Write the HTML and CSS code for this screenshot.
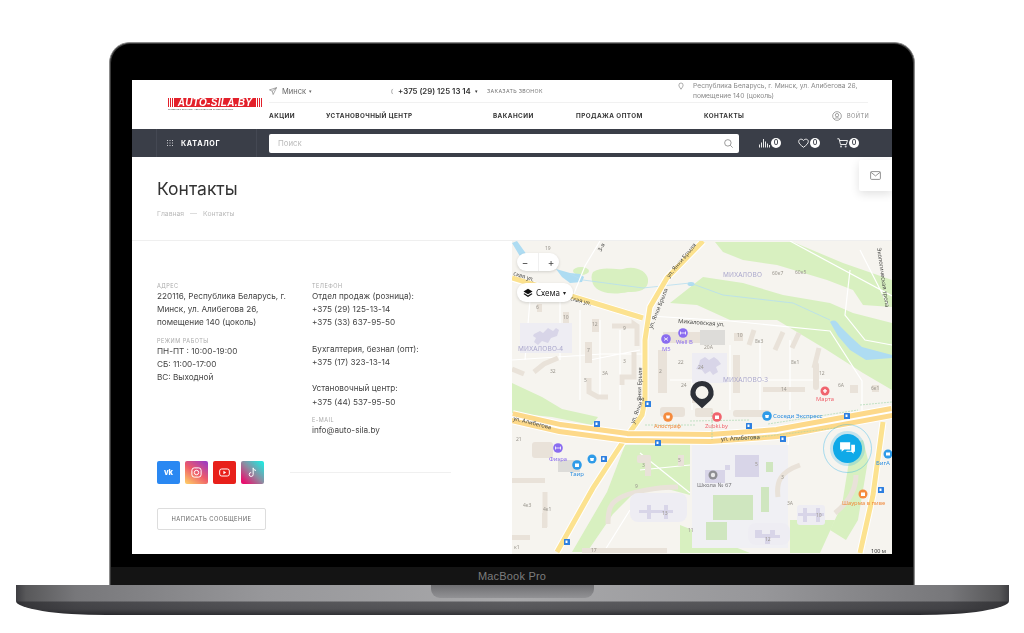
FILE: index.html
```html
<!DOCTYPE html>
<html lang="ru">
<head>
  <meta charset="UTF-8" />
  <title>Контакты</title>
  <link rel="stylesheet" href="styles.css">
</head>
<body>
  <div class="laptop">
    <div class="lid">
      <div class="screen">
        <header class="site-head">
          <a class="logo">
            <span class="logo-band"><i class="logo-ends"></i><b>AUTO-SILA.BY</b><i class="logo-ends"></i></span>
            <span class="logo-sub">ИНТЕРНЕТ-МАГАЗИН АВТОТОВАРОВ И ЭЛЕКТРОНИКИ</span>
          </a>
          <div class="head-right">
            <div class="top-row">
              <div class="city">
                <svg class="ico" viewBox="0 0 10 10"><path class="line" d="M9.500.8.600 3.600l3.400 1.600 1.200 4.200zM4 5.200 9.500.8"/></svg>
                <span>Минск</span><em>▾</em>
              </div>
              <div class="phone">
                <svg class="ico-ph" viewBox="0 0 5 8"><path class="line" d="M3.600.8C1.600 1.400 1.600 6.600 3.600 7.200"/></svg>
                <b>+375 (29) 125 13 14</b><em>▾</em>
              </div>
              <a class="callback">заказать звонок</a>
              <div class="address">
                <svg class="ico-pin" viewBox="0 0 8 10"><path class="line" d="M4 9.300C2.200 6.800 1.200 5.400 1.200 3.800a2.800 2.800 0 0 1 5.600 0C6.800 5.400 5.800 6.800 4 9.300z"/></svg>
                <span>Республика Беларусь, г. Минск, ул. Алибегова 26, помещение 140 (цоколь)</span>
              </div>
            </div>
            <nav class="main-nav">
              <a>Акции</a>
              <a>Установочный центр</a>
              <a>Вакансии</a>
              <a>Продажа оптом</a>
              <a>Контакты</a>
              <a class="login">
                <svg class="ico-user" viewBox="0 0 12 12"><circle class="line" cx="6" cy="6" r="5.200"/><circle class="line" cx="6" cy="5" r="2"/><path class="line" d="M2.800 9.500C4 7.800 8 7.800 9.200 9.500"/></svg>
                <span>войти</span>
              </a>
            </nav>
          </div>
        </header>

        <div class="dark-bar">
          <div class="catalog">
            <svg class="ico-grid" viewBox="0 0 6 6"><path class="dots" d="M0 0h1v1H0zM2.500 0h1v1h-1zM5 0h1v1H5zM0 2.500h1v1H0zM2.500 2.500h1v1h-1zM5 2.500h1v1H5zM0 5h1v1H0zM2.500 5h1v1h-1zM5 5h1v1H5z"/></svg>
            <span>Каталог</span>
          </div>
          <div class="search">
            <span>Поиск</span>
            <svg class="ico-search" viewBox="0 0 10 10"><circle class="line" cx="4.300" cy="4.300" r="3.600"/><path class="line" d="m7 7 2.600 2.600"/></svg>
          </div>
          <div class="counters">
            <div class="counter">
              <svg viewBox="0 0 11 10"><path class="bars" d="M.5 6.500v3M2.500 4.500v5M4.500 1v8.500M6.500 3.500v6M8.500 5.500v4M10.500 7v2.500"/></svg>
              <b>0</b>
            </div>
            <div class="counter">
              <svg viewBox="0 0 11 10"><path class="bars" d="M5.500 9.300C2.500 7 .7 5.500.7 3.400.7 1 4 .4 5.500 2.500 7 .4 10.300 1 10.300 3.400c0 2.100-1.800 3.600-4.800 5.900z"/></svg>
              <b>0</b>
            </div>
            <div class="counter">
              <svg viewBox="0 0 11 10"><path class="bars" d="M.3.800h1.800L3.500 6.500h5.800l1.200-4H2.700"/><circle class="dots" cx="4" cy="8.600" r="1"/><circle class="dots" cx="8.700" cy="8.600" r="1"/></svg>
              <b>0</b>
            </div>
          </div>
        </div>

        <div class="mail-tab">
          <svg viewBox="0 0 11 9"><rect class="line" x=".6" y=".6" width="9.800" height="7.800" rx="1"/><path class="line" d="m.8 1.200 4.700 3.700 4.700-3.700"/></svg>
        </div>

        <section class="page-title">
          <h1>Контакты</h1>
          <div class="crumbs"><span>Главная</span><i></i><span>Контакты</span></div>
        </section>

        <section class="contacts">
          <div class="info">
            <div class="info-cols">
              <div class="col">
                <h4>Адрес</h4>
                <p>220116, Республика Беларусь, г. Минск, ул. Алибегова 26, помещение 140 (цоколь)</p>
                <h4>Режим работы</h4>
                <p>ПН-ПТ : 10:00-19:00<br>СБ: 11:00-17:00<br>ВС: Выходной</p>
              </div>
              <div class="col">
                <h4>Телефон</h4>
                <p>Отдел продаж (розница):<br>+375 (29) 125-13-14<br>+375 (33) 637-95-50<br><br>Бухгалтерия, безнал (опт):<br>+375 (17) 323-13-14<br><br>Установочный центр:<br>+375 (44) 537-95-50</p>
                <h4>E-mail</h4>
                <p>info@auto-sila.by</p>
              </div>
            </div>
            <div class="social-row">
              <a class="soc vk">vk</a>
              <a class="soc ig"><svg viewBox="0 0 10 10"><rect class="wline" x=".8" y=".8" width="8.400" height="8.400" rx="2.200"/><circle class="wline" cx="5" cy="5" r="2"/></svg></a>
              <a class="soc yt"><svg viewBox="0 0 10 10"><rect class="wline" x=".6" y="1.800" width="8.800" height="6.400" rx="1.800"/><path class="wfill" d="M4 3.500 6.500 5 4 6.500z"/></svg></a>
              <a class="soc tt"><svg viewBox="0 0 10 10"><path class="wline" d="M5.600.8v6a1.800 1.800 0 1 1-1.800-1.800M5.600.8c.2 1.400 1.200 2.200 2.600 2.300"/></svg></a>
              <span class="soc-line"></span>
            </div>
            <a class="msg-btn">Написать сообщение</a>
          </div>

          <div class="map">
            <svg class="map-svg" viewBox="512 241 380 313">
              <rect class="m-bg" x="512" y="241" width="380" height="313"/>
              <!-- зелень -->
              <path class="m-green" d="M715 242h78l50 21 49 17v27l-29-2-10-15-26-10-50-15-34-5-20-8z"/>
              <path class="m-green" d="M670 303l33-26 40 6 40 12 47 8 23 10 39 10v67l-29-17-36-23-50-30h-47l-33-15z"/>
              <path class="m-green" d="M593 272c10-6 20-2 30-3 12-4 24 2 25 10 1 8-5 14-20 13-14 3-30 2-35-8-2-5-2-9 0-12z"/>
              <ellipse class="m-green" cx="581" cy="271" rx="8" ry="4"/>
              <path class="m-green" d="M512 383l30 14 20 12 36 8-6 8-40-8-40-4z"/>
              <path class="m-green" d="M625 445h65v50l-30-8-25 5-22 22-26 38h-15l35-60z"/>
              <path class="m-green" d="M790 445h50l10 10-8 50-12 25 16 10 12-20 10-60-5-20-20 5z"/>
              <path class="m-green" d="M680 525l70 28h-70zM790 520l45 0-15 33h-30z"/>
              <rect class="m-school" x="692" y="445" width="96" height="103"/>
              <rect class="m-field" x="713" y="495" width="40" height="25"/>
              <rect class="m-field" x="706" y="522" width="21" height="18"/>
              <rect class="m-field" x="761" y="487" width="8" height="25"/>
              <rect class="m-field" x="766" y="462" width="7" height="10"/>
              <!-- вода -->
              <path class="m-water" d="M512 243l5-2 10 14-6 3zM556 269l14 4 10 1 4 3-2 5-12 1-8-6zM830 322c4-3 7-1 10 4l12 12 10 9 30 8v3l-26 2-16-10-12-14z"/>
              <ellipse class="m-water" cx="691" cy="284" rx="3.500" ry="2"/>
              <path class="m-stream" d="M570 274l13 6 60 8 47-5 33 12 70 8 37 17"/>
              <!-- дорожки -->
              <path class="m-path" d="M790 241l102 55M860 250l28 55M850 270l-5 45 20 25 27 5M600 241l-15 25-12 30M650 316l80 5 100 10 32 50v30M670 380h160M512 360l90-6 40 0M640 350l-50 10M580 310v90M600 320v80M620 330v80M530 300l-5 60M560 300v60M692 380v30M730 345v65M760 340v70M790 340v70M640 453l50 40M640 470l50-5M630 510l-25 40M790 430l-2 15"/>
              <!-- дома -->
              <g class="m-house">
                <rect x="658" y="350" width="9" height="43"/>
                <rect x="733" y="355" width="7" height="38"/>
                <rect x="763" y="387" width="42" height="5"/>
                <rect x="663" y="332" width="37" height="11"/>
                <rect x="734" y="333" width="9" height="8"/>
                <rect x="585" y="342" width="7" height="21"/>
                <rect x="563" y="312" width="6" height="12"/>
                <rect x="592" y="319" width="7" height="13"/>
                <rect x="537" y="304" width="5" height="8"/>
                <rect x="660" y="407" width="25" height="10" rx="3"/>
                <rect x="695" y="408" width="18" height="9" rx="2"/>
                <rect x="733" y="410" width="37" height="7" rx="3"/>
                <rect x="532" y="442" width="21" height="16" rx="3"/>
                <rect x="637" y="455" width="14" height="8" rx="2"/>
                <rect x="645" y="463" width="6" height="13"/>
                <rect x="678" y="455" width="6" height="11"/>
                <rect x="512" y="478" width="33" height="5"/>
                <rect x="582" y="548" width="85" height="5"/>
                <rect x="512" y="535" width="18" height="5"/>
                <rect x="542" y="513" width="5" height="15"/>
                <rect x="692" y="398" width="6" height="5"/>
                <rect x="850" y="385" width="8" height="8"/>
                <rect x="872" y="385" width="7" height="7"/>
                <rect x="813" y="362" width="6" height="28" rx="3"/>
              </g>
              <path class="m-hstroke" d="M612 326h22v-2l3 2v20M622 385v-8h12v-25M512 369l12 5M534 372l10-8 14-6M589 378v14l9 5h10M775 350l8-18M792 348l7-15M814 368l5-20M749 345l5-15M608 524c0-14 2-20 10-25 10-7 40-12 60-12M778 497c-2-15 2-25 22-32M856 475c0 14-6 26-21 38M545 492v35"/>
              <path class="m-grey" d="M700 330h25v15h-25zM558 460h22v12h-22z"/>
              <!-- кварталы -->
              <rect class="m-lav" x="520" y="323" width="52" height="30"/>
              <rect class="m-lav" x="692" y="353" width="35" height="30"/>
              <rect class="m-lav" x="630" y="493" width="57" height="29" rx="8"/>
              <rect class="m-lav" x="797" y="505" width="28" height="20" rx="3"/>
              <rect class="m-lav" x="748" y="523" width="42" height="22" rx="8"/>
              <path class="m-blob" d="M534 334l6-3 3 2 5-5 5 3 3-3 3 2-2 6-6 2-3 5-6-2-4 4-4-3 2-4-3-2z"/>
              <path class="m-blob" d="M700 360l5-3 4 3 5-3 4 3 3 4-5 3 2 5-5 3-3-4-5 3-3-4-6-1 3-5z"/>
              <path class="m-blob" d="M735 455h24v22h-24zM705 470h25v-5h-5v18h-20z"/>
              <path class="m-blob" d="M647 505h4v5h13v-5h4v5h5v3h-5v6h-4v-6h-13v6h-4v-6h-8v-3h8zM803 508h4v5h9v-5h4v5h4v3h-4v6h-4v-6h-9v6h-4v-6h-5v-3h5zM755 530h7v4h8v-4h5v5h5v3h-10v6h-5v-6h-10z"/>
              <!-- дороги -->
              <g class="road-case">
                <path d="M512 278l131 40"/>
                <path d="M703 241l-36 37-17 29-5 33v60l-3 15-19 27-30 46-36 64"/>
                <path d="M883 422l-10 73-13 58"/>
              </g>
              <g class="road">
                <path d="M512 278l131 40"/>
                <path d="M703 241l-36 37-17 29-5 33v60l-3 15-19 27-30 46-36 64"/>
                <path d="M883 422l-10 73-13 58"/>
              </g>
              <path class="road-big-case" d="M512 417l48 11 67 9 83 1 67-5 115-21"/>
              <path class="road-big" d="M512 417l48 11 67 9 83 1 67-5 115-21"/>
              <path class="road-mid" d="M512 417l48 11 67 9 83 1 67-5 115-21"/>
              <path class="m-dash" d="M645 425h50M690 421l60-1M768 424l90-14M712 412v28M735 440l100-12M860 405l32-3"/>
              <!-- подписи -->
              <text class="t-dist" x="723" y="277">МИХАЛОВО</text>
              <text class="t-dist" x="723" y="382">МИХАЛОВО-3</text>
              <text class="t-dist" x="518" y="351">МИХАЛОВО-4</text>
              <text class="t-num" x="545" y="250">19</text>
              <text class="t-num" x="772" y="275">60к7</text>
              <text class="t-num" x="795" y="274">60к5</text>
              <text class="t-num" x="563" y="319">10</text>
              <text class="t-num" x="592" y="326">12</text>
              <text class="t-num" x="536" y="309">6</text>
              <text class="t-num" x="623" y="330">9</text>
              <text class="t-num" x="587" y="352">7</text>
              <text class="t-num" x="623" y="363">3</text>
              <text class="t-num" x="602" y="375">3А</text>
              <text class="t-num" x="550" y="373">32</text>
              <text class="t-num" x="584" y="382">5</text>
              <text class="t-num" x="659" y="373">2</text>
              <text class="t-num" x="678" y="364">22</text>
              <text class="t-num" x="698" y="369">24</text>
              <text class="t-num" x="681" y="387">24</text>
              <text class="t-num" x="704" y="349">20А</text>
              <text class="t-num" x="737" y="337">10</text>
              <text class="t-num" x="755" y="343">8к3</text>
              <text class="t-num" x="791" y="364">8к1</text>
              <text class="t-num" x="819" y="375">12</text>
              <text class="t-num" x="781" y="391">14</text>
              <text class="t-num" x="838" y="387">6А</text>
              <text class="t-num" x="871" y="390">6к1</text>
              <text class="t-num" x="516" y="441">21</text>
              <text class="t-num" x="642" y="467">3</text>
              <text class="t-num" x="678" y="462">5</text>
              <text class="t-num" x="755" y="466">5</text>
              <text class="t-num" x="781" y="479">3</text>
              <text class="t-num" x="635" y="488">9</text>
              <text class="t-num" x="523" y="507">4к3</text>
              <text class="t-num" x="543" y="511">4к1</text>
              <text class="t-num" x="662" y="515">13</text>
              <text class="t-num" x="688" y="532">11</text>
              <text class="t-num" x="787" y="505">3А</text>
              <text class="t-num" x="816" y="517">10</text>
              <text class="t-num" x="765" y="541">12</text>
              <text class="t-num" x="591" y="552">17</text>
              <text class="t-num" x="514" y="549">к1</text>
              <text class="t-road" x="678" y="323" transform="rotate(4 678 323)">Михаловская ул.</text>
              <text class="t-road" x="721" y="441" transform="rotate(-3 721 441)">ул. Алибегова</text>
              <text class="t-road" x="513" y="420" transform="rotate(14 513 420)">ул. Алибегова</text>
              <text class="t-road" x="652" y="329" transform="rotate(-68 652 329)">ул. Янки Брыля</text>
              <text class="t-road" x="669" y="278" transform="rotate(-50 669 278)">ул. Янки Брыля</text>
              <text class="t-road" x="641" y="401" transform="rotate(-88 641 401)">Янки Брыля</text>
              <text class="t-road" x="634" y="424" transform="rotate(-68 634 424)">ул. Янки Б</text>
              <text class="t-road" x="570" y="300" transform="rotate(15 570 300)">ская ул.</text>
              <text class="t-road" x="513" y="275" transform="rotate(18 513 275)">ская ул.</text>
              <text class="t-road" x="877" y="248" transform="rotate(82 877 248)">Экологическая тропа</text>
              <text class="t-road" x="601" y="252" transform="rotate(-60 601 252)">3-я</text>

              <!-- метки -->
              <circle class="p-purple" cx="666" cy="339" r="4.800"/>
              <text class="t-purple" x="662" y="351">M5</text>
              <circle class="p-purple" cx="683" cy="333" r="4.800"/>
              <text class="t-purple" x="676" y="344">Well B</text>
              <circle class="p-red" cx="825" cy="391" r="4.500"/>
              <text class="t-red" x="816" y="401">Марта</text>
              <circle class="p-orange" cx="668" cy="417" r="4.800"/>
              <text class="t-orange" x="654" y="428">Алостраф</text>
              <circle class="p-red" cx="717" cy="417" r="4.800"/>
              <text class="t-red" x="705" y="428">Zubki.by</text>
              <circle class="p-blue" cx="767" cy="416" r="4.800"/>
              <text class="t-blue" x="773" y="418">Соседи Экспресс</text>
              <circle class="p-purple" cx="558" cy="448" r="4.800"/>
              <text class="t-purple" x="549" y="461">Фиэра</text>
              <circle class="p-blue" cx="592" cy="459" r="4.500"/>
              <circle class="p-blue" cx="577" cy="465" r="4.800"/>
              <text class="t-blue" x="570" y="476">Таир</text>
              <circle class="p-grey" cx="713" cy="475" r="4.500"/>
              <text class="t-grey" x="697" y="487">Школа № 67</text>
              <circle class="p-orange" cx="863" cy="494" r="4.500"/>
              <text class="t-orange" x="842" y="505">Шаурма в пиве</text>
              <circle class="p-blue" cx="888" cy="454" r="4.500"/>
              <text class="t-blue" x="876" y="465">БигА</text>
              <path class="poi-mark" d="M664 337.500l4 3M668 337.500l-4 3M680.500 333h5M680.500 331.500v3M685.500 331.500v3M555.500 448h5M555.500 446.500v3M560.500 446.500v3"/>
              <path class="poi-fill" d="M823 390.200h1.300v-1.300h1.400v1.300h1.300v1.400h-1.300v1.300h-1.400v-1.300H823zM666 415.500h4l-.5 3h-3zM715 415.500h4v3.500h-4zM765 415h4l-.6 3h-2.800zM590 458h4l-.6 3h-2.800zM575 463.500h4v3.500h-4zM861 492.500h4v3.500h-4zM886 452.500h4v3h-4z"/>
              <circle class="poi-white" cx="713" cy="475" r="2.200"/>
              <path class="stops" d="M594.500 421h5q.5 0 .5.500v5q0 .5-.5.500h-5q-.5 0-.5-.500v-5q0-.5.500-.500zM645.500 401h5q.5 0 .5.500v5q0 .5-.5.500h-5q-.5 0-.5-.500v-5q0-.5.500-.500zM655.500 440h5q.5 0 .5.500v5q0 .5-.5.500h-5q-.5 0-.5-.500v-5q0-.5.500-.500zM746.500 423h5q.5 0 .5.500v5q0 .5-.5.500h-5q-.5 0-.5-.500v-5q0-.5.500-.500zM780.500 436h5q.5 0 .5.500v5q0 .5-.5.500h-5q-.5 0-.5-.500v-5q0-.5.500-.500zM844.500 413h5q.5 0 .5.500v5q0 .5-.5.500h-5q-.5 0-.5-.500v-5q0-.5.500-.500zM601.500 456h5q.5 0 .5.500v5q0 .5-.5.500h-5q-.5 0-.5-.500v-5q0-.5.500-.500zM564.500 539h5q.5 0 .5.500v5q0 .5-.5.500h-5q-.5 0-.5-.500v-5q0-.5.500-.500zM878.500 487h5q.5 0 .5.500v5q0 .5-.5.500h-5q-.5 0-.5-.500v-5q0-.5.500-.500z"/>
              <path class="stop-mark" d="M595.500 422.500h2v2.500h-2zM646.500 402.500h2v2.500h-2zM656.500 441.500h2v2.500h-2zM747.500 424.500h2v2.500h-2zM781.500 437.500h2v2.500h-2zM845.500 414.500h2v2.500h-2zM602.500 457.500h2v2.500h-2zM565.500 540.500h2v2.500h-2zM879.500 488.500h2v2.500h-2z"/>
              <path class="pin" fill-rule="evenodd" d="M702 381a11.500 11.500 0 0 1 8.400 19.400l-8.400 7.800-8.400-7.800A11.500 11.500 0 0 1 702 381zm0 5a6.500 6.500 0 1 0 0 13 6.500 6.500 0 0 0 0-13z"/>
              <text class="t-scale" x="871" y="553">100 м</text>
            </svg>

            <div class="zoom-ctrl"><span>−</span><i></i><span>+</span></div>
            <div class="layer-ctrl">
              <svg viewBox="0 0 10 10"><path class="dots-k" d="M5 .8 9.500 3.500 5 6.200.5 3.500z"/><path class="dots-k" d="M1.500 5.300 5 7.400l3.500-2.100 1 .7L5 8.900.5 6z"/></svg>
              <span>Схема</span><em>▾</em>
            </div>
            <div class="chat-btn">
              <svg viewBox="0 0 16 14"><path class="wfill" d="M1 1h9.500v7H5L2.500 10V8H1zM11.500 3.500H15v6.500h-1.200v2L11.500 10H6.500l1-1h4z"/></svg>
            </div>
          </div>
        </section>
      </div>
      <div class="chin">MacBook Pro</div>
    </div>
    <div class="base">
      <div class="notch"></div>
    </div>
  </div>
</body>
</html>
```

FILE: styles.css
```css
* {
  box-sizing: border-box;
}
body {
  margin: 0;
  background: #fff;
  font-family: Inter, "Open Sans", sans-serif;
  color: #333;
}
a {
  color: inherit;
  text-decoration: none;
}
h1, h4, p {
  margin: 0;
}
em {
  font-style: normal;
}
.line {
  fill: none;
  stroke: #777;
  stroke-width: .8;
}

/* ноутбук */
.laptop {
  width: 993px;
  margin-left: 16px;
  padding-top: 42px;
}
.lid {
  width: 806px;
  margin-left: 93px;
  height: 543px;
  background: #000;
  border: 1px solid #8c8c8c;
  border-bottom: none;
  border-radius: 21px 21px 0 0;
  padding: 37px 22px 0;
  display: flex;
  flex-direction: column;
  box-shadow: inset 0 0 0 1px #3a3a3a;
}
.screen {
  position: relative;
  flex: none;
  width: 760px;
  height: 474px;
  background: #fff;
  overflow: hidden;
  filter: blur(.3px);
}
.chin {
  margin: 13px -21px 0;
  height: 18px;
  background: #141414;
  color: #7d7d7d;
  font-family: "Liberation Sans", sans-serif;
  font-size: 11px;
  letter-spacing: .2px;
  line-height: 19px;
  text-align: center;
}
.base {
  width: 993px;
  height: 30px;
  display: flex;
  justify-content: center;
  background:
    linear-gradient(180deg, rgba(0,0,0,0) 0, rgba(0,0,0,0) 16px, rgba(30,30,34,.55) 17px, rgba(30,30,34,.6) 24px, rgba(20,20,24,.8) 30px),
    linear-gradient(90deg, #3e3e42 0, #58585a 1%, #77777a 6%, #97979a 25%, #a9a9ab 50%, #97979a 75%, #77777a 94%, #58585a 99%, #3e3e42 100%);
  border-radius: 0 0 90px 90px / 0 0 14px 14px;
}
.notch {
  width: 163px;
  height: 13px;
  background: linear-gradient(180deg, #6f6f72, #929295);
  border-radius: 0 0 9px 9px;
}

/* шапка */
.site-head {
  display: flex;
  height: 49px;
}
.logo {
  flex: none;
  width: 137px;
  padding: 18px 0 0 36px;
  display: flex;
  flex-direction: column;
}
.logo-band {
  width: 94px;
  height: 9px;
  display: flex;
  align-items: center;
  justify-content: space-between;
  background: #e3202a;
  border-radius: 1px;
}
.logo-band b {
  color: #fff;
  font-family: "Liberation Sans", sans-serif;
  font-size: 10px;
  font-style: italic;
  font-weight: 700;
  letter-spacing: .3px;
  line-height: 9px;
}
.logo-ends {
  width: 7px;
  height: 9px;
  background: repeating-linear-gradient(90deg, #e3202a 0 1px, #fff 1px 2px);
}
.logo-sub {
  margin-top: 1px;
  width: 94px;
  font-family: "Liberation Sans", sans-serif;
  font-size: 2.400px;
  font-weight: 700;
  color: #666;
  white-space: nowrap;
  overflow: hidden;
  line-height: 3px;
}
.head-right {
  flex: 1;
  min-width: 0;
  padding-right: 24px;
}
.top-row {
  height: 23px;
  display: grid;
  grid-template-columns: 121px 97px 191px 1fr;
  align-items: center;
  border-bottom: 1px solid #f1f1f1;
  font-size: 7.500px;
  color: #666;
}
.city {
  display: flex;
  align-items: center;
  gap: 5px;
}
.city em, .phone em {
  font-size: 5px;
  margin-left: -2px;
}
.ico {
  width: 8px;
  height: 8px;
}
.phone {
  display: flex;
  align-items: center;
  gap: 4px;
  color: #333;
}
.phone b {
  font-size: 7.800px;
  font-weight: 600;
  white-space: nowrap;
}
.phone em {
  margin-left: 0;
}
.ico-ph {
  width: 4px;
  height: 7px;
}
.callback {
  font-size: 5.300px;
  letter-spacing: .3px;
  text-transform: uppercase;
  color: #777;
  white-space: nowrap;
}
.address {
  display: flex;
  align-items: flex-start;
  gap: 9px;
  font-size: 6.700px;
  line-height: 10px;
  color: #888;
  padding-right: 4px;
}
.ico-pin {
  flex: none;
  width: 6px;
  height: 8px;
  margin-top: 1px;
}
.main-nav {
  height: 26px;
  display: grid;
  grid-template-columns: 57px 167px 83px 128px 128px 1fr;
  align-items: center;
  font-size: 6.300px;
  font-weight: 700;
  letter-spacing: .45px;
  text-transform: uppercase;
  color: #333;
  white-space: nowrap;
}
.login {
  display: flex;
  align-items: center;
  gap: 5px;
  font-weight: 400;
  font-size: 5.600px;
  color: #888;
}
.ico-user {
  width: 10px;
  height: 10px;
}

/* тёмная полоса */
.dark-bar {
  height: 28px;
  background: #3a3e48;
  display: flex;
  align-items: center;
  padding-left: 24px;
}
.catalog {
  flex: none;
  width: 101px;
  height: 28px;
  display: flex;
  align-items: center;
  gap: 8px;
  padding-left: 10px;
  border-left: 1px solid #444853;
  border-right: 1px solid #444853;
  color: #fff;
  font-size: 7.200px;
  font-weight: 700;
  letter-spacing: .7px;
  text-transform: uppercase;
}
.ico-grid {
  width: 6px;
  height: 6px;
}
.dots {
  fill: #cfd0d4;
}
.search {
  flex: none;
  width: 470px;
  height: 19px;
  margin-left: 12px;
  background: #fff;
  border-radius: 2px;
  display: flex;
  align-items: center;
  justify-content: space-between;
  padding: 0 6px 0 9px;
  font-size: 7.800px;
  color: #bbb;
}
.ico-search {
  width: 9px;
  height: 9px;
}
.counters {
  display: flex;
  gap: 17px;
  margin-left: 20px;
}
.counter {
  display: flex;
  align-items: center;
  gap: 1px;
  width: 22px;
}
.counter svg {
  width: 11px;
  height: 10px;
  flex: none;
}
.counter b {
  flex: none;
  width: 10px;
  height: 10px;
  border-radius: 50%;
  background: #fff;
  color: #3a3e48;
  font-size: 7px;
  font-weight: 600;
  line-height: 10px;
  text-align: center;
}
.bars {
  fill: none;
  stroke: #fff;
  stroke-width: .9;
}
.mail-tab {
  position: absolute;
  top: 80px;
  right: 0;
  width: 33px;
  height: 31px;
  background: #fff;
  border-radius: 2px 0 0 2px;
  box-shadow: 0 3px 10px rgba(0,0,0,.12);
  display: flex;
  align-items: center;
  justify-content: center;
}
.mail-tab svg {
  width: 11px;
  height: 9px;
}

/* заголовок */
.page-title {
  height: 84px;
  padding: 21px 25px 0;
  border-bottom: 1px solid #efefef;
}
.page-title h1 {
  font-size: 17.500px;
  font-weight: 400;
  line-height: 22px;
  color: #333;
}
.crumbs {
  margin-top: 9px;
  display: flex;
  align-items: center;
  gap: 6px;
  font-size: 6.800px;
  color: #bbb;
}
.crumbs i {
  width: 7px;
  height: 1px;
  background: #ddd;
}

/* контакты */
.contacts {
  display: flex;
  height: 314px;
}
.info {
  flex: none;
  width: 380px;
  padding: 42px 0 0 25px;
}
.info-cols {
  display: flex;
  height: 178px;
}
.col {
  width: 155px;
  padding-right: 16px;
}
.col h4 {
  font-size: 5.500px;
  font-weight: 400;
  letter-spacing: .5px;
  line-height: 7px;
  text-transform: uppercase;
  color: #aaa;
  margin-top: 8px;
}
.col h4:first-child {
  margin-top: 0;
}
.col p {
  font-size: 8.200px;
  line-height: 13.200px;
  color: #444;
}
.social-row {
  display: flex;
  align-items: center;
  gap: 5px;
  height: 23px;
}
.soc {
  width: 23px;
  height: 23px;
  border-radius: 2px;
  display: flex;
  align-items: center;
  justify-content: center;
  color: #fff;
  font-size: 7.500px;
  font-weight: 800;
}
.soc svg {
  width: 11px;
  height: 11px;
}
.vk {
  background: #2a88f2;
}
.ig {
  background: linear-gradient(35deg, #fdc766 5%, #ee5a6a 50%, #9b3cc4 95%);
}
.yt {
  background: #e8201a;
}
.tt {
  background: linear-gradient(45deg, #e8106e 10%, #8f8aa0 50%, #27e3dc 92%);
}
.wline {
  fill: none;
  stroke: #fff;
  stroke-width: .9;
}
.wfill {
  fill: #fff;
}
.soc-line {
  flex: none;
  width: 161px;
  height: 1px;
  margin-left: 21px;
  background: #f0f0f0;
}
.msg-btn {
  display: block;
  width: 109px;
  height: 22px;
  margin-top: 24px;
  border: 1px solid #ddd;
  border-radius: 2px;
  font-size: 5.800px;
  letter-spacing: .45px;
  line-height: 20px;
  text-align: center;
  text-transform: uppercase;
  color: #666;
}

/* карта */
.map {
  position: relative;
  flex: none;
  width: 380px;
  height: 313px;
  overflow: hidden;
}
.map-svg {
  display: block;
  width: 380px;
  height: 313px;
}
.map-svg text {
  font-family: "Noto Sans", sans-serif;
}
.m-bg { fill: #f6f4ef; }
.m-green { fill: #d8f0c0; }
.m-school { fill: #f0f0f4; }
.m-field { fill: #cfe6bf; }
.m-water { fill: #aedcf2; }
.m-stream { fill: none; stroke: #b6def0; stroke-width: .8; }
.m-path { fill: none; stroke: #fff; stroke-width: 1.200; }
.m-house { fill: #e9e2d9; }
.m-hstroke { fill: none; stroke: #e9e2d9; stroke-width: 5; }
.m-grey { fill: #dddcd9; }
.m-lav { fill: #eeedf3; }
.m-blob { fill: #d8d5e8; }
.road-case path { fill: none; stroke: #fff; stroke-width: 7; }
.road path { fill: none; stroke: #fce28f; stroke-width: 5; }
.road-big-case { fill: none; stroke: #fff; stroke-width: 14; }
.road-big { fill: none; stroke: #fdd98a; stroke-width: 12; }
.road-mid { fill: none; stroke: #fff; stroke-width: 2; }
.m-dash { fill: none; stroke: #9ed4a6; stroke-width: .6; stroke-dasharray: 2 1; }
.t-dist { font-size: 6.500px; fill: #aaa7cc; letter-spacing: .2px; }
.t-num { font-size: 5px; fill: #9a968e; }
.t-road { font-size: 5.800px; fill: #4a4a48; }
.t-purple { font-size: 5.800px; fill: #8a6cf0; }
.t-red { font-size: 5.800px; fill: #f0646e; }
.t-orange { font-size: 5.800px; fill: #f08a3c; }
.t-blue { font-size: 6.100px; fill: #2f8fe0; }
.t-grey { font-size: 5.800px; fill: #77777a; }
.t-scale { font-size: 5.500px; fill: #333; }
.p-purple { fill: #8a6cf0; }
.p-red { fill: #f0646e; }
.p-orange { fill: #f58a3c; }
.p-blue { fill: #2f9be8; }
.p-grey { fill: #8d8d92; }
.poi-mark { fill: none; stroke: #fff; stroke-width: .8; }
.poi-fill { fill: #fff; }
.poi-white { fill: #fff; opacity: .8; }
.stops { fill: #2d7fe0; }
.stop-mark { fill: #fff; }
.pin { fill: #2d3038; }
.dots-k { fill: #111; }
.zoom-ctrl {
  position: absolute;
  top: 12px;
  left: 5px;
  width: 42px;
  height: 18px;
  display: flex;
  align-items: center;
  justify-content: space-around;
  background: #fff;
  border-radius: 9px;
  box-shadow: 0 1px 3px rgba(0,0,0,.15);
  font-size: 10px;
  color: #444;
}
.zoom-ctrl i {
  width: 1px;
  height: 100%;
  background: #f0f0f0;
}
.layer-ctrl {
  position: absolute;
  top: 42px;
  left: 5px;
  width: 56px;
  height: 19px;
  display: flex;
  align-items: center;
  gap: 3px;
  padding-left: 6px;
  background: #fff;
  border-radius: 9px;
  box-shadow: 0 1px 3px rgba(0,0,0,.15);
  font-family: "Noto Sans", sans-serif;
  font-size: 8px;
  color: #222;
}
.layer-ctrl svg {
  width: 10px;
  height: 10px;
}
.layer-ctrl em {
  font-size: 6px;
}
.chat-btn {
  position: absolute;
  top: 193px;
  left: 321px;
  width: 29px;
  height: 29px;
  border-radius: 50%;
  background: #0fa9e8;
  box-shadow: 0 0 0 3px rgba(15,169,232,.22);
  outline: 1px solid rgba(15,169,232,.35);
  outline-offset: 9px;
  display: flex;
  align-items: center;
  justify-content: center;
}
.chat-btn svg {
  width: 17px;
  height: 15px;
}
```
